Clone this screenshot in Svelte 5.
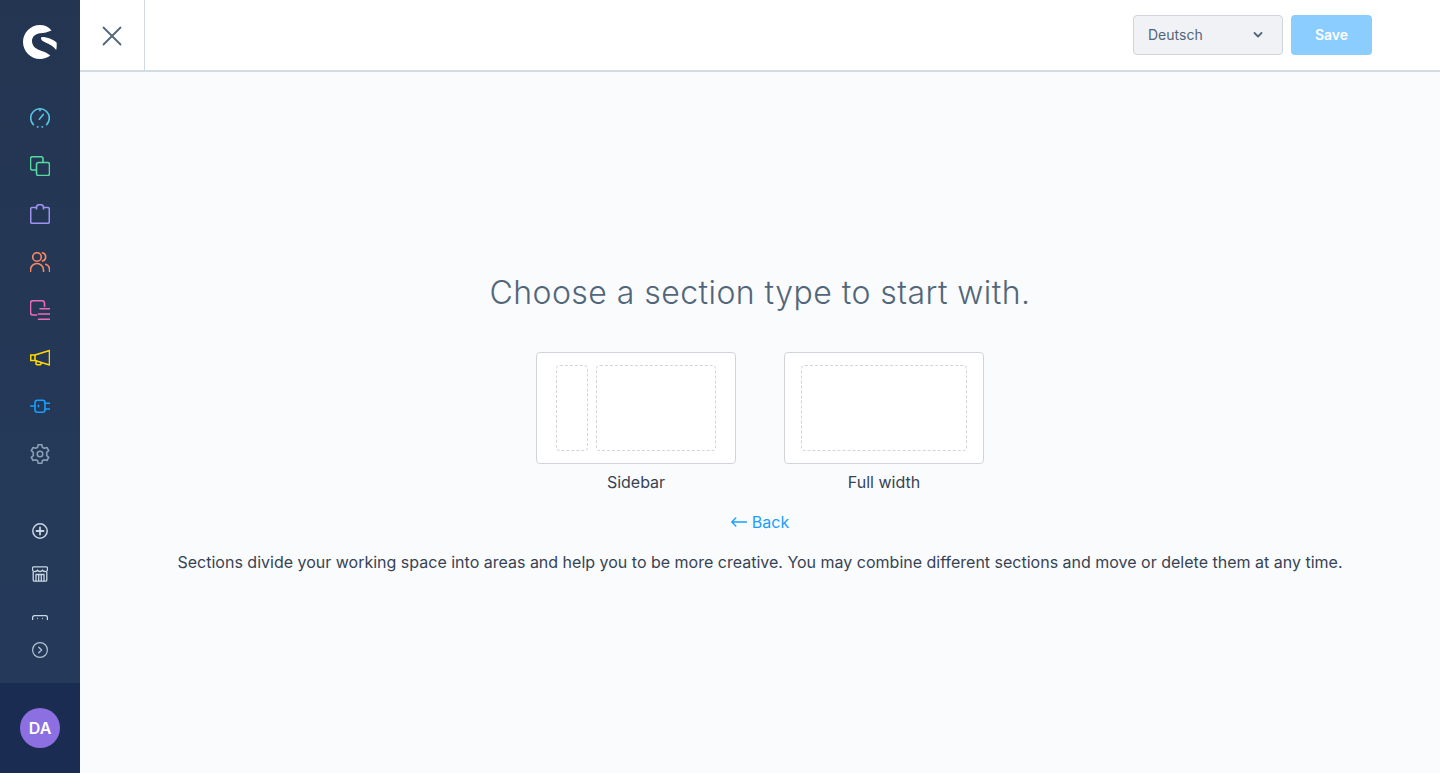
<script lang="ts">
  const mainNav = [
    { key: "dashboard", color: "#57c4e5" },
    { key: "catalogue", color: "#57d9a3" },
    { key: "orders", color: "#a092f0" },
    { key: "customers", color: "#f88962" },
    { key: "content", color: "#e86bbb" },
    { key: "marketing", color: "#ffd700" },
    { key: "extensions", color: "#189eff" },
    { key: "settings", color: "#8a9fb5" }
  ];

  const sectionTypes = [
    { key: "sidebar", label: "Sidebar", zones: ["narrow", "wide"] },
    { key: "full", label: "Full width", zones: ["full"] }
  ];
</script>

<div class="admin">
  <aside class="sidebar">
    <div class="logo">
      <svg viewBox="0 0 34 34" width="34" height="34">
        <path fill="#fff" d="M28.500 5.500C25.500 1.800 21.500 0 17 0 7.600 0 0 7.600 0 17 0 26.400 7.600 34 17 34 20.800 34 24.500 32.600 27.300 30.600 25 28.400 22.500 27.200 19.500 26.200 14 24.400 9 22 9 16 9 11.500 13 8.600 17 8.300 21 8 25 7.200 28.500 5.500Z"/>
        <path fill="#fff" d="M18 12.600C18.300 11.800 20 11.800 22 12.300 26.500 13.200 31 15 33.600 17.500 33.900 20 33.700 22.600 33.200 25 30.500 21.500 26.500 19.200 23 17.800 20.500 16.800 17.500 15 18 12.600Z"/>
      </svg>
    </div>

    <nav class="main-nav">
      {#each mainNav as item (item.key)}
        <a class="nav-item" href="#{item.key}" style="color: {item.color}" aria-label={item.key}>
          <svg viewBox="0 0 20 20" width="20" height="20" fill="none" stroke="currentColor" stroke-width="1.600" stroke-linecap="round" stroke-linejoin="round">
            {#if item.key === "dashboard"}
              <path d="M3.400 16.600A9.300 9.300 0 1 1 16.600 16.600" />
              <path d="M7.500 18.900h.4M12.100 18.900h.4M9.300 11.200l4-4.800M10 .8v2" />
            {:else if item.key === "catalogue"}
              <path d="M6 14H2.500a2 2 0 0 1-2-2V2.700a2 2 0 0 1 2-2H11a2 2 0 0 1 2 2V6.500" />
              <rect x="6.500" y="6.500" width="13" height="13" rx="2" />
            {:else if item.key === "orders"}
              <path d="M6.500 3.500H2A1.400 1.400 0 0 0 .7 5v13A1.400 1.400 0 0 0 2 19.300h16a1.400 1.400 0 0 0 1.300-1.400V5A1.400 1.400 0 0 0 18 3.500h-4.500" />
              <path d="M6.500 5V3A2.500 2.500 0 0 1 9 .7h2A2.500 2.500 0 0 1 13.500 3v2" />
            {:else if item.key === "customers"}
              <circle cx="7" cy="5" r="4.300" />
              <path d="M.5 19.500v-1.500a6.500 6.500 0 0 1 13 0v1.500M12.500.8a4.300 4.300 0 0 1 0 8.300M15.800 12.300a6 6 0 0 1 3.800 5.500v1.700" />
            {:else if item.key === "content"}
              <path d="M6.700 15H3A2.500 2.500 0 0 1 .5 12.500V3A2.500 2.500 0 0 1 3 .7h9A2.500 2.500 0 0 1 14.500 3v3.500" />
              <path d="M10 8.700h9.500M8.500 14h11M8.500 19.300h11" />
            {:else if item.key === "marketing"}
              <path d="M5 7 19.500 2.500v14.500L5 12.500z" />
              <path d="M5 7H.7v5.500H5M6.500 13l-.5 2a1.300 1.300 0 0 0 1.500 1.700h3l1-1.800" />
            {:else if item.key === "extensions"}
              <rect x="5" y="4.200" width="10" height="12" rx="2.500" />
              <path d="M5 10H.7M15 7.300h4.700M15 13h4.700M8.500 9.200v1.600" />
            {:else}
              <circle cx="10" cy="10" r="2.800" />
              <path d="M8.200.6H11.800L12.400 3.200 14.300 4.300 16.900 3.500 18.700 6.600 16.700 8.400V11.600L18.700 13.400 16.900 16.500 14.300 15.700 12.400 16.800 11.800 19.400H8.200L7.600 16.800 5.700 15.700 3.100 16.500 1.300 13.400 3.300 11.600V8.400L1.300 6.600 3.100 3.500 5.700 4.300 7.600 3.200Z" />
            {/if}
          </svg>
        </a>
      {/each}
    </nav>

    <div class="bottom-nav">
      <div class="bottom-scroll">
        <a class="bottom-item" href="#add" aria-label="add">
          <svg viewBox="0 0 16 16" width="16" height="16" fill="none" stroke="currentColor" stroke-width="1.500" stroke-linecap="round">
            <circle cx="8" cy="8" r="7.200" />
            <path stroke-width="1.800" d="M8 4.500v7M4.500 8h7" />
          </svg>
        </a>
        <a class="bottom-item" href="#shop" aria-label="shop">
          <svg viewBox="0 0 16 16" width="16" height="16" fill="none" stroke="currentColor" stroke-width="1.300" stroke-linejoin="round">
            <path d="M1.500.8h13a1 1 0 0 1 1 1V4a2 2 0 0 1-2.500 1.500A2.500 2.500 0 0 1 10.500 4 2.500 2.500 0 0 1 8 5.500 2.500 2.500 0 0 1 5.500 4 2.500 2.500 0 0 1 3 5.500 2 2 0 0 1 .5 4V1.800a1 1 0 0 1 1-1z" />
            <path d="M1.200 6v8a1.200 1.200 0 0 0 1.200 1.200h11.200a1.200 1.200 0 0 0 1.200-1.200V6M4 15V8.500h8V15M6.700 8.500V15M9.300 8.500V15" />
          </svg>
        </a>
        <a class="bottom-item clipped" href="#sw" aria-label="system">
          <svg viewBox="0 0 16 16" width="16" height="16" fill="none" stroke="currentColor" stroke-width="1.300">
            <rect x=".6" y=".6" width="14.800" height="13" rx="2" />
            <path d="M5 3.500h.8M10.200 3.500h.8" />
          </svg>
        </a>
      </div>
      <button class="collapse" type="button" aria-label="collapse">
        <svg viewBox="0 0 16 16" width="16" height="16" fill="none" stroke="currentColor" stroke-width="1.200" stroke-linecap="round" stroke-linejoin="round">
          <circle cx="8" cy="8" r="7.400" />
          <path stroke-width="1.400" d="M6.800 5.200 9.600 8l-2.800 2.800" />
        </svg>
      </button>
    </div>

    <div class="profile">
      <span class="avatar">DA</span>
    </div>
  </aside>

  <div class="page">
    <header class="topbar">
      <button class="close" type="button" aria-label="close">
        <svg viewBox="0 0 20 20" width="20" height="20" fill="none" stroke="#52667a" stroke-width="1.800" stroke-linecap="round">
          <path d="M1.500 1.500 18.500 18.500M18.500 1.500 1.500 18.500" />
        </svg>
      </button>
      <div class="actions">
        <div class="lang-select">
          <span>Deutsch</span>
          <svg viewBox="0 0 10 6" width="10" height="6" fill="none" stroke="#52667a" stroke-width="1.800" stroke-linecap="round" stroke-linejoin="round">
            <path d="M1.500 1 5 4.500 8.500 1" />
          </svg>
        </div>
        <button class="save" type="button">Save</button>
      </div>
    </header>

    <main class="content">
      <h2>Choose a section type to start with.</h2>
      <div class="types">
        {#each sectionTypes as type (type.key)}
          <div class="type">
            <div class="preview" class:preview-full={type.key === "full"}>
              {#each type.zones as zone}
                <span class="zone {zone}"></span>
              {/each}
            </div>
            <span class="type-label">{type.label}</span>
          </div>
        {/each}
      </div>
      <a class="back" href="#back">
        <svg viewBox="0 0 16 10" width="16" height="10" fill="none" stroke="currentColor" stroke-width="1.300" stroke-linecap="round" stroke-linejoin="round">
          <path d="M15.500 5H1M4.800 1 .8 5l4 4" />
        </svg>
        Back
      </a>
      <p class="hint">Sections divide your working space into areas and help you to be more creative. You may combine different sections and move or delete them at any time.</p>
    </main>
  </div>
</div>

<style>
  :global(body) {
    margin: 0;
    font-family: Inter, "Liberation Sans", sans-serif;
    color: #2b3136;
  }

  .admin {
    display: flex;
    height: 773px;
    overflow: hidden;
    background: #fafbfd;
  }

  .sidebar {
    flex: 0 0 80px;
    display: flex;
    flex-direction: column;
    background: linear-gradient(#233551, #263b5c);
  }

  .logo {
    box-sizing: border-box;
    height: 94px;
    display: flex;
    align-items: flex-start;
    justify-content: center;
    padding-top: 25px;
  }

  .main-nav {
    display: flex;
    flex-direction: column;
  }

  .nav-item {
    height: 48px;
    display: flex;
    align-items: center;
    justify-content: center;
  }

  .bottom-nav {
    margin-top: auto;
    display: flex;
    flex-direction: column;
  }

  .bottom-scroll {
    height: 111px;
    overflow: hidden;
    display: flex;
    flex-direction: column;
    align-items: center;
  }

  .bottom-item {
    flex: 0 0 43px;
    display: flex;
    align-items: center;
    justify-content: center;
    color: #c9d6e3;
  }

  .clipped {
    margin-top: 6px;
  }

  .collapse {
    height: 60px;
    margin-bottom: 3px;
    padding: 0;
    border: 0;
    background: none;
    color: #b4c2d0;
    display: flex;
    align-items: center;
    justify-content: center;
  }

  .profile {
    flex: 0 0 90px;
    display: flex;
    align-items: center;
    justify-content: center;
    background: #1b2c52;
  }

  .avatar {
    width: 40px;
    height: 40px;
    border-radius: 50%;
    background: #8c6fe0;
    color: #fff;
    font-size: 16px;
    font-weight: 600;
    display: flex;
    align-items: center;
    justify-content: center;
  }

  .page {
    flex: 1;
    display: flex;
    flex-direction: column;
    min-width: 0;
  }

  .topbar {
    flex: 0 0 72px;
    box-sizing: border-box;
    display: flex;
    justify-content: space-between;
    background: #fff;
    border-bottom: 2px solid #d1dce3;
  }

  .close {
    width: 65px;
    padding: 2px 0 0;
    border: 0;
    border-right: 1px solid #d1d9e0;
    background: none;
    display: flex;
    align-items: center;
    justify-content: center;
  }

  .actions {
    display: flex;
    gap: 8px;
    align-items: flex-start;
    padding: 15px 68px 0 0;
  }

  .lang-select {
    box-sizing: border-box;
    width: 150px;
    height: 40px;
    padding: 0 19px 1px 14px;
    display: flex;
    align-items: center;
    justify-content: space-between;
    background: #f0f2f5;
    border: 1px solid #d1d5d9;
    border-radius: 4px;
    font-size: 14px;
    color: #52667a;
  }

  .save {
    width: 81px;
    height: 40px;
    padding: 0 0 1px;
    border: 0;
    border-radius: 4px;
    background: #8bcdff;
    color: #fff;
    font: 600 14px Inter, "Liberation Sans", sans-serif;
  }

  .content {
    flex: 1;
    display: flex;
    flex-direction: column;
    align-items: center;
    justify-content: center;
    padding-bottom: 3px;
  }

  h2 {
    margin: 0 0 38px;
    font-size: 32px;
    line-height: 46px;
    font-weight: 350;
    letter-spacing: 0.45px;
    color: #52667a;
  }

  .types {
    display: flex;
    gap: 48px;
    margin-top: -2px;
  }

  .type {
    display: flex;
    flex-direction: column;
    align-items: center;
    gap: 8px;
  }

  .preview {
    box-sizing: border-box;
    width: 200px;
    height: 112px;
    padding: 12px 19px;
    display: flex;
    gap: 8px;
    background: #fff;
    border: 1px solid #d1d5d9;
    border-radius: 4px;
  }

  .preview-full {
    padding: 12px 16px;
  }

  .zone {
    display: block;
    border: 1px dashed #d1d5d9;
    border-radius: 4px;
  }

  .narrow {
    flex: 0 0 32px;
    box-sizing: border-box;
  }

  .wide,
  .full {
    flex: 1;
  }

  .type-label {
    font-size: 16px;
    line-height: 20px;
    color: #364354;
  }

  .back {
    margin-top: 20px;
    display: flex;
    align-items: center;
    gap: 5px;
    font-size: 16px;
    line-height: 20px;
    color: #189eff;
    text-decoration: none;
  }

  .hint {
    margin: 20px 0 0;
    font-size: 16px;
    line-height: 20px;
    color: #364354;
  }
</style>
